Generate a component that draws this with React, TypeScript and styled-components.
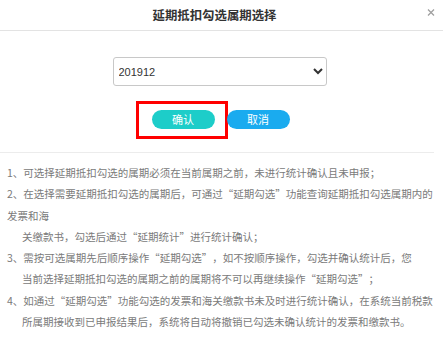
import React from "react";
import styled, { createGlobalStyle } from "styled-components";

const GlobalStyle = createGlobalStyle`
    html, body {
        margin: 0;
        padding: 0;
        background: #fff;
    }
`;

const Dialog = styled.div`
    width: 443px;
    height: 344px;
    background: #fff;
    font-family: "Liberation Sans", "Noto Sans CJK SC", sans-serif;
    overflow: hidden;
`;

const Header = styled.div`
    display: flex;
    align-items: center;
    height: 30px;
    border-bottom: 1px solid #e3e3e3;
    padding-right: 4px;
`;

const Title = styled.h3`
    flex: 1;
    margin: 0;
    padding-left: 6px;
    text-align: center;
    font-family: "Noto Sans CJK SC", sans-serif;
    font-size: 12.4px;
    font-weight: 700;
    color: #333;
    line-height: 28px;
`;

const CloseButton = styled.button`
    width: 16px;
    height: 16px;
    padding: 0;
    border: 0;
    background: none;
    display: flex;
    align-items: center;
    justify-content: center;
    margin-top: -5px;
    cursor: pointer;
`;

const SelectRow = styled.div`
    display: flex;
    justify-content: center;
    padding-right: 4px;
    margin-top: 26px;
`;

const PeriodSelect = styled.select`
    width: 214px;
    height: 29px;
    border: 1px solid #c8c8c8;
    border-radius: 3px;
    background: #fff;
    font-family: "Liberation Sans", sans-serif;
    font-size: 11px;
    color: #333;
    padding: 0 0 0 1px;
    outline: none;
`;

const ButtonRow = styled.div`
    display: flex;
    justify-content: center;
    gap: 12px;
    padding-right: 2px;
    margin-top: 24px;
`;

const PillButton = styled.button<{ $tone: "confirm" | "cancel" }>`
    position: relative;
    width: 63px;
    height: 19px;
    padding: 0;
    border: 0;
    border-radius: 10px;
    background: ${p => (p.$tone === "confirm" ? "#1dcdc9" : "#1aabef")};
    color: #fff;
    font-family: "Noto Sans CJK SC", sans-serif;
    font-size: 11px;
    line-height: 19px;
    cursor: pointer;
`;

const Highlight = styled.span`
    position: absolute;
    left: -16px;
    top: -9px;
    width: 92px;
    height: 38px;
    box-sizing: border-box;
    border: 3px solid #f00;
    pointer-events: none;
`;

const Divider = styled.hr`
    margin: 23px 9px 0 0;
    border: 0;
    border-top: 1px solid #ececec;
`;

const Notes = styled.div`
    padding: 9px 0 0 7px;
    font-family: "Noto Sans CJK SC", sans-serif;
    font-size: 10.5px;
    line-height: 21.3px;
    color: #7a7a7a;
    white-space: nowrap;
    text-spacing-trim: space-all;
`;

const NoteLine = styled.div<{ $indent?: boolean }>`
    padding-left: ${p => (p.$indent ? "15px" : "0")};
`;

const notes: { text: string; indent?: boolean }[] = [
    { text: "1、可选择延期抵扣勾选的属期必须在当前属期之前，未进行统计确认且未申报；" },
    { text: "2、在选择需要延期抵扣勾选的属期后，可通过“延期勾选”功能查询延期抵扣勾选属期内的" },
    { text: "发票和海" },
    { text: "关缴款书，勾选后通过“延期统计”进行统计确认；", indent: true },
    { text: "3、需按可选属期先后顺序操作“延期勾选”，如不按顺序操作，勾选并确认统计后，您" },
    { text: "当前选择延期抵扣勾选的属期之前的属期将不可以再继续操作“延期勾选”；", indent: true },
    { text: "4、如通过“延期勾选”功能勾选的发票和海关缴款书未及时进行统计确认，在系统当前税款" },
    { text: "所属期接收到已申报结果后，系统将自动将撤销已勾选未确认统计的发票和缴款书。", indent: true },
];

export default function App() {
    return (
        <Dialog>
            <GlobalStyle />
            <Header>
                <Title>延期抵扣勾选属期选择</Title>
                <CloseButton aria-label="关闭">
                    <svg width="8" height="7" viewBox="0 0 8 7">
                        <path d="M1 0.5 L7 6.5 M7 0.5 L1 6.5" stroke="#a0a0a0" strokeWidth="1.3" fill="none" />
                    </svg>
                </CloseButton>
            </Header>
            <SelectRow>
                <PeriodSelect defaultValue="201912">
                    <option value="201912">201912</option>
                    <option value="201911">201911</option>
                    <option value="201910">201910</option>
                </PeriodSelect>
            </SelectRow>
            <ButtonRow>
                <PillButton $tone="confirm">
                    确认
                    <Highlight />
                </PillButton>
                <PillButton $tone="cancel">取消</PillButton>
            </ButtonRow>
            <Divider />
            <Notes>
                {notes.map((n, i) => (
                    <NoteLine key={i} $indent={n.indent}>
                        {n.text}
                    </NoteLine>
                ))}
            </Notes>
        </Dialog>
    );
}
